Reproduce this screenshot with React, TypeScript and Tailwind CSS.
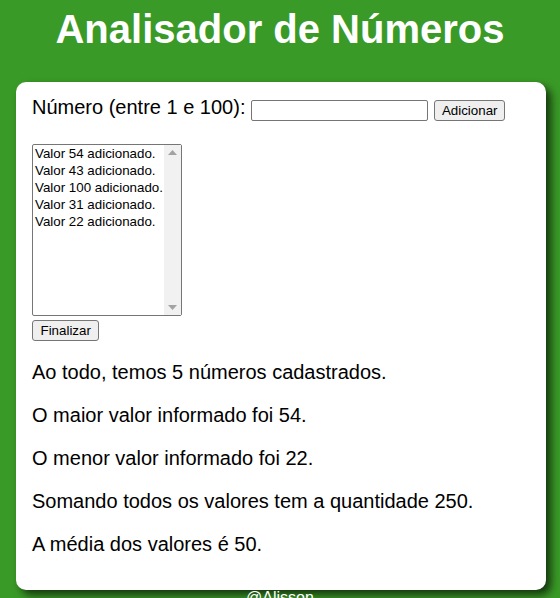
import React from "react";

const items = [
  "Valor 54 adicionado.",
  "Valor 43 adicionado.",
  "Valor 100 adicionado.",
  "Valor 31 adicionado.",
  "Valor 22 adicionado.",
];

export default function App() {
  return (
    <div className="min-h-screen bg-[#3a9a27] font-['Liberation_Sans',Arial,sans-serif] text-black overflow-hidden">
      <h1 className="pt-[6px] text-center text-[40px] font-bold leading-[46px] text-white">
        Analisador de Números
      </h1>
      <div className="mt-[30px] ml-[16px] w-[530px] rounded-[10px] bg-white px-[16px] pt-[14px] pb-[34px] shadow-[5px_5px_8px_rgba(0,0,0,0.65)]">
        <div className="flex h-[23px] items-start text-[20px] leading-[23px]">
          <span>Número (entre 1 e 100):</span>
          <input
            type="text"
            className="ml-[6px] mt-[4px] h-[21px] w-[177px] rounded-[2px] border border-[#767676] bg-white px-[2px] text-[13.33px] outline-none"
          />
          <button className="ml-[6px] mt-[4px] h-[21px] rounded-[3px] border border-[#767676] bg-[#efefef] px-[6.5px] text-[13.33px] leading-[15px]">
            Adicionar
          </button>
        </div>
        <div className="mt-[25px] flex h-[172px] w-[150px] rounded-[2px] border border-[#767676] bg-white">
          <div className="flex-1 pl-[2px] text-[13.33px] leading-[17px]">
            {items.map((t) => (
              <div key={t} className="whitespace-nowrap">
                {t}
              </div>
            ))}
          </div>
          <div className="flex w-[17px] flex-col items-center justify-between bg-[#f1f1f1] py-[5px]">
            <svg width="9" height="5" viewBox="0 0 9 5">
              <polygon points="4.5,0 9,5 0,5" fill="#a3a3a3" />
            </svg>
            <svg width="9" height="5" viewBox="0 0 9 5">
              <polygon points="0,0 9,0 4.5,5" fill="#a3a3a3" />
            </svg>
          </div>
        </div>
        <div className="mt-[4px] flex">
          <button className="h-[21px] rounded-[3px] border border-[#767676] bg-[#efefef] px-[7.5px] text-[13.33px] leading-[15px]">
            Finalizar
          </button>
        </div>
        <div className="mt-[20px] flex flex-col gap-[20px] text-[20px] leading-[23px]">
          <p>Ao todo, temos 5 números cadastrados.</p>
          <p>O maior valor informado foi 54.</p>
          <p>O menor valor informado foi 22.</p>
          <p>Somando todos os valores tem a quantidade 250.</p>
          <p>A média dos valores é 50.</p>
        </div>
      </div>
      <footer className="-mt-[1px] text-center text-[16px] leading-[18px] text-white">
        @Alisson
      </footer>
    </div>
  );
}
